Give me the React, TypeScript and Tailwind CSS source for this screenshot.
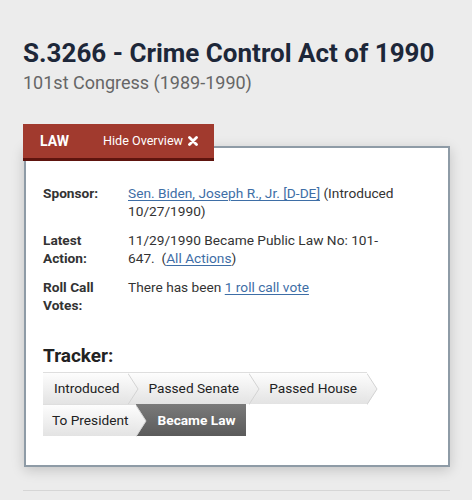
import React from "react";

interface Step {
    label: string;
    pad: string;
    current?: boolean;
}

const steps: Step[] = [
    { label: "Introduced", pad: "pl-[11px] pr-[9px]" },
    { label: "Passed Senate", pad: "pl-[20px] pr-[10px]" },
    { label: "Passed House", pad: "pl-[20px] pr-[10px]" },
    { label: "To President", pad: "pl-[9px] pr-[7px]" },
    { label: "Became Law", pad: "pl-[22px] pr-[10px]", current: true },
];

const Arrow: React.FC<{ id: string }> = ({ id }) => (
    <svg
        className="absolute left-full top-0 z-10"
        width="11"
        height="32"
        viewBox="0 0 11 32"
    >
        <defs>
            <linearGradient id={id} x1="0" y1="0" x2="0" y2="32" gradientUnits="userSpaceOnUse">
                <stop offset="0" stopColor="#fdfdfd" />
                <stop offset="1" stopColor="#e3e3e3" />
            </linearGradient>
        </defs>
        <polygon points="0,0 10,16 0,32" fill={`url(#${id})`} />
        <polyline points="0,0.5 10,16 0,31.5" fill="none" stroke="#d3d3d3" strokeWidth="1" />
    </svg>
);

const Tracker: React.FC = () => (
    <div className="flex flex-wrap">
        {steps.map((s, i) => {
            if (s.current) {
                return (
                    <div
                        key={s.label}
                        className={
                            "relative flex h-[32px] items-center bg-linear-to-b from-[#7a7a7a] to-[#5b5b5b] font-bold text-white " +
                            s.pad
                        }
                    >
                        {s.label}
                    </div>
                );
            }
            return (
                <div
                    key={s.label}
                    className={
                        "relative flex h-[32px] items-center border-t border-[#dedede] bg-linear-to-b from-[#fdfdfd] to-[#e3e3e3] text-[#222] " +
                        s.pad
                    }
                >
                    {s.label}
                    <Arrow id={`arr${i}`} />
                </div>
            );
        })}
    </div>
);

const Row: React.FC<{ label: React.ReactNode; children: React.ReactNode }> = ({ label, children }) => (
    <div className="grid grid-cols-[85px_1fr]">
        <div className="font-bold text-[#333]">{label}</div>
        <div className="text-[#333]">{children}</div>
    </div>
);

const link = "text-[#3e6ea6] underline underline-offset-2 decoration-1";

export default function App() {
    return (
        <div
            className="min-h-[500px] bg-[#ececec] pl-[23px] pr-[22px] pt-[37px]"
            style={{ fontFamily: "Roboto, 'Liberation Sans', sans-serif" }}
        >
            <h1 className="whitespace-nowrap text-[26px] font-bold leading-[32px] text-[#1d2739]">
                S.3266 - Crime Control Act of 1990
            </h1>
            <div className="mt-[2px] text-[18px] leading-[24px] text-[#666]">
                101st Congress (1989-1990)
            </div>

            {/* tab + overview card */}
            <div className="mt-[29px]">
                <div className="relative z-20 flex w-[191px] items-center border-b-[3px] border-[#5e140e] bg-[#a13a2e] py-[7px] pl-[17px] text-[14px] leading-[20px] text-white">
                    <span className="font-bold">LAW</span>
                    <span className="ml-[34px] flex items-center text-[12.6px]">
                        Hide Overview
                        <svg className="ml-[5px]" width="10" height="10" viewBox="0 0 10 10">
                            <path d="M1.5 1.5 L8.5 8.5 M8.5 1.5 L1.5 8.5" stroke="white" strokeWidth="2.8" strokeLinecap="round" />
                        </svg>
                    </span>
                </div>
                <div className="relative z-10 ml-px -mt-[15px] border-2 border-[#8e9ba6] bg-white pb-[29px] pl-[17px] pt-[36px] shadow-[0_3px_12px_rgba(0,0,0,0.18)]">
                    <div className="flex w-[362px] flex-col gap-[11px] text-[13.7px] leading-[18px]">
                        <Row label="Sponsor:">
                            <a className={link}>Sen. Biden, Joseph R., Jr. [D-DE]</a> (Introduced 10/27/1990)
                        </Row>
                        <Row
                            label={
                                <>
                                    Latest
                                    <br />
                                    Action:
                                </>
                            }
                        >
                            11/29/1990 Became Public Law No: 101-647.&nbsp; (<a className={link}>All Actions</a>)
                        </Row>
                        <Row
                            label={
                                <>
                                    Roll Call
                                    <br />
                                    Votes:
                                </>
                            }
                        >
                            There has been <a className={link}>1 roll call vote</a>
                        </Row>
                    </div>

                    <div className="mt-[30px] text-[19px] font-bold leading-[24px] text-[#222]">Tracker:</div>
                    <div className="mt-[4px] w-[362px] text-[13.7px]">
                        <Tracker />
                    </div>
                </div>
            </div>

            <div className="mt-[23px] h-px bg-[#d6d6d6]" />
        </div>
    );
}
